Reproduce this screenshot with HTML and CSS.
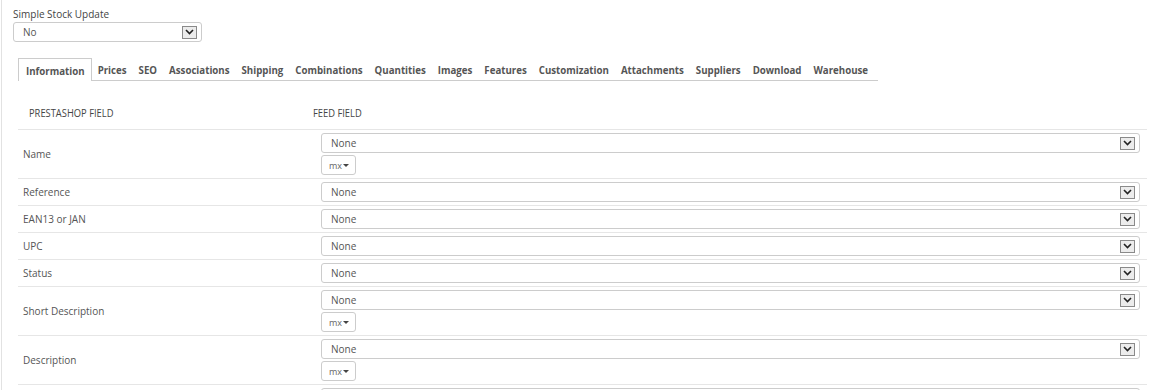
FILE: index.html
```html
<!DOCTYPE html>
<html lang="en">
<head>
  <meta charset="UTF-8">
  <title>Feed Field Mapping</title>
  <link rel="stylesheet" href="styles.css">
</head>
<body>
  <div class="panel">
    <div class="form-group">
      <label class="field-label">Simple Stock Update</label>
      <div class="select select-small">
        <span>No</span>
        <span class="arrow"><svg width="9" height="6" viewBox="0 0 9 6"><path d="M1 1l3.5 3.5L8 1" fill="none" stroke="#222" stroke-width="1.6"/></svg></span>
      </div>
    </div>

    <ul class="tabs">
      <li class="active">Information</li>
      <li>Prices</li>
      <li>SEO</li>
      <li>Associations</li>
      <li>Shipping</li>
      <li>Combinations</li>
      <li>Quantities</li>
      <li>Images</li>
      <li>Features</li>
      <li>Customization</li>
      <li>Attachments</li>
      <li>Suppliers</li>
      <li>Download</li>
      <li>Warehouse</li>
    </ul>

    <table class="mapping">
      <thead>
        <tr>
          <th class="col-ps"><span>PRESTASHOP FIELD</span></th>
          <th class="col-feed"><span>FEED FIELD</span></th>
        </tr>
      </thead>
      <tbody id="mapping-rows">
        <!-- rows are built below -->
      </tbody>
    </table>
  </div>

  <script>
    // Fields shown in the Information tab; lang = has a language picker
    var fields = [
      { name: 'Name', lang: true },
      { name: 'Reference' },
      { name: 'EAN13 or JAN' },
      { name: 'UPC' },
      { name: 'Status' },
      { name: 'Short Description', lang: true },
      { name: 'Description', lang: true },
      { name: 'Meta Title' }
    ];

    var arrow = '<span class="arrow"><svg width="9" height="6" viewBox="0 0 9 6"><path d="M1 1l3.5 3.5L8 1" fill="none" stroke="#222" stroke-width="1.6"/></svg></span>';
    var rows = document.getElementById('mapping-rows');

    fields.forEach(function (f) {
      var tr = document.createElement('tr');
      var html = '<td class="col-ps">' + f.name + '</td><td><div class="select"><span>None</span>' + arrow + '</div>';
      if (f.lang) {
        html += '<button class="lang-btn">mx<span class="caret"></span></button>';
      }
      html += '</td>';
      tr.innerHTML = html;
      rows.appendChild(tr);
    });
  </script>
</body>
</html>
```

FILE: styles.css
```css
body {
  margin: 0;
  font-family: "Open Sans", Arial, sans-serif;
  font-size: 10px;
  color: #555;
  background: #fff;
  overflow: hidden;
}
.panel {
  margin-left: 1px;
  border-left: 1px solid #e2e2e2;
  padding: 7px 6px 0 11px;
}
.field-label {
  display: block;
  font-size: 10px;
  line-height: 14px;
  color: #444;
}
.select {
  display: flex;
  align-items: center;
  justify-content: space-between;
  box-sizing: border-box;
  height: 20px;
  border: 1px solid #ccc;
  border-radius: 3px;
  padding: 0 4px 0 9px;
  color: #555;
  font-size: 10px;
  background: #fff;
}
.select-small {
  width: 189px;
  margin-top: 1px;
}
.arrow {
  display: flex;
  align-items: center;
  justify-content: center;
  box-sizing: border-box;
  width: 15px;
  height: 13px;
  border: 1px solid #8a8a8a;
  background: #ececec;
}
.tabs {
  display: flex;
  list-style: none;
  margin: 16px 0 0 5px;
  padding: 0;
  width: 860px;
  border-bottom: 1px solid #ccc;
}
.tabs li {
  padding: 0 6px;
  height: 21px;
  line-height: 26px;
  font-weight: bold;
  font-size: 9.7px;
  color: #555;
  margin-bottom: -1px;
}
.tabs li.active {
  padding: 0 6px 0 7px;
  border: 1px solid #ccc;
  border-bottom: none;
  background: #fff;
  height: 22px;
}
.mapping {
  width: 1129px;
  margin: 18px 0 0 5px;
  border-collapse: collapse;
}
.mapping th {
  text-align: left;
  font-weight: normal;
  font-size: 11px;
  color: #444;
  height: 26px;
  padding: 0 0 4px 0;
  vertical-align: middle;
}
.mapping th span {
  display: inline-block;
  transform: scaleX(0.85);
  transform-origin: left center;
}
.mapping th.col-ps {
  padding-left: 11px;
}
.mapping th.col-feed span {
  margin-left: -3px;
}
.mapping td {
  border-top: 1px solid #e6e6e6;
  padding: 3px 7px 3px 5px;
  vertical-align: middle;
}
.mapping td.col-ps {
  width: 286px;
  color: #555;
}
.lang-btn {
  display: flex;
  align-items: center;
  margin-top: 2px;
  height: 20px;
  width: 35px;
  padding: 0 0 0 7px;
  border: 1px solid #ccc;
  border-radius: 3px;
  background: #fff;
  font-family: "Open Sans", Arial, sans-serif;
  font-size: 9px;
  color: #666;
}
.caret {
  display: inline-block;
  margin-left: 1px;
  border-left: 3px solid transparent;
  border-right: 3px solid transparent;
  border-top: 3px solid #444;
}
```
